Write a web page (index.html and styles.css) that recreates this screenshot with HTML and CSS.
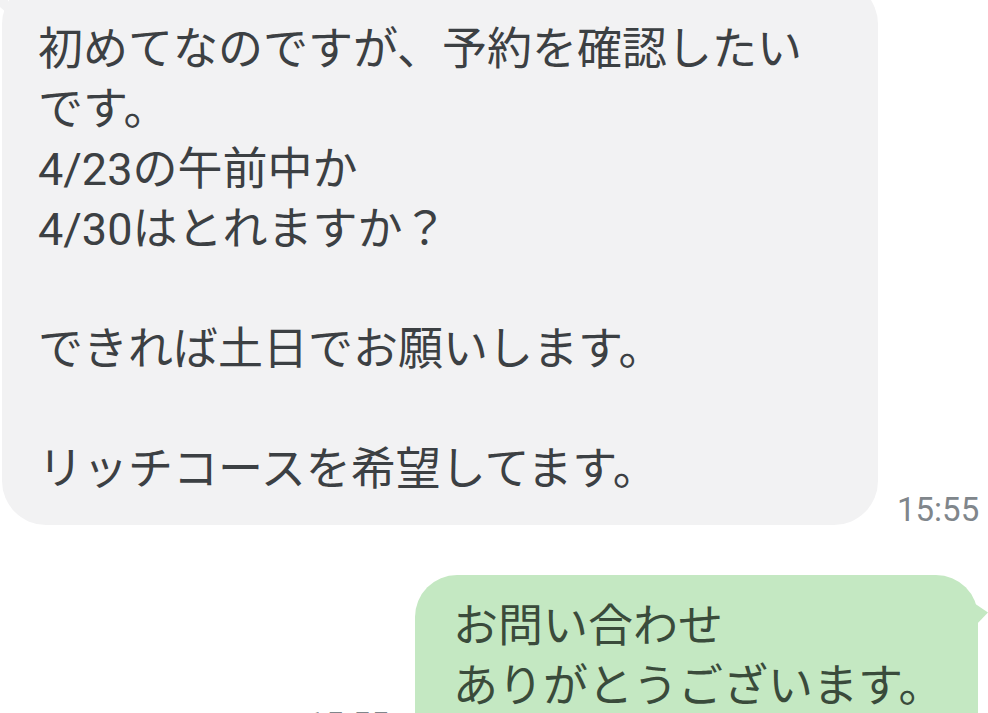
FILE: index.html
```html
<!DOCTYPE html>
<html lang="ja">
<head>
<meta charset="utf-8">
<link rel="stylesheet" href="styles.css">
</head>
<body>
<div class="thread">
  <div class="row row-in">
    <div class="bubble bubble-in">初めてなのですが、予約を確認したい<br>です。<br>4/23の午前中か<br>4/30はとれますか？<br><br>できれば土日でお願いします。<br><br>リッチコースを希望してます。</div>
    <div class="time time-in">15:55</div>
  </div>
  <div class="row row-out">
    <div class="time time-out">15:55</div>
    <div class="bubble bubble-out">お問い合わせ<br>ありがとうございます。</div>
  </div>
</div>
</body>
</html>
```

FILE: styles.css
```css
html, body {
  margin: 0;
  padding: 0;
  background: #ffffff;
  overflow: hidden;
}

body {
  width: 988px;
  height: 713px;
  font-family: Roboto, "Noto Sans CJK JP", sans-serif;
}

.thread {
  display: flex;
  flex-direction: column;
  gap: 50px;
  margin-top: -20px;
}

.row {
  display: flex;
}

.row-in {
  align-items: flex-end;
  margin-left: 2px;
}

.row-out {
  justify-content: flex-end;
  align-items: flex-start;
  margin-right: 10px;
}

.bubble {
  position: relative;
  font-size: 45px;
  line-height: 60px;
  box-sizing: border-box;
}

.bubble-in {
  width: 876px;
  padding: 40px 36px 25px 36px;
  background: #f2f2f3;
  color: #3c4043;
  border-radius: 44px;
}

.bubble-in::before {
  content: "";
  position: absolute;
  left: -8px;
  top: 12px;
  width: 14px;
  height: 22px;
  background: #f2f2f3;
  clip-path: polygon(100% 0, 0 45%, 100% 100%);
}

.bubble-out {
  width: 563px;
  height: 200px;
  padding: 22px 28px 0 38px;
  background: #c4e8c2;
  color: #3a4b3b;
  border-radius: 42px;
}

.bubble-out::after {
  content: "";
  position: absolute;
  right: -10px;
  top: 28px;
  width: 14px;
  height: 24px;
  background: #c4e8c2;
  clip-path: polygon(0 0, 100% 40%, 0 100%);
}

.time {
  font-size: 33px;
  line-height: 33px;
  color: #80868b;
}

.time-in {
  margin-left: 19px;
  margin-bottom: -1px;
}

.time-out {
  margin-top: 133px;
  margin-right: 26px;
}
```
